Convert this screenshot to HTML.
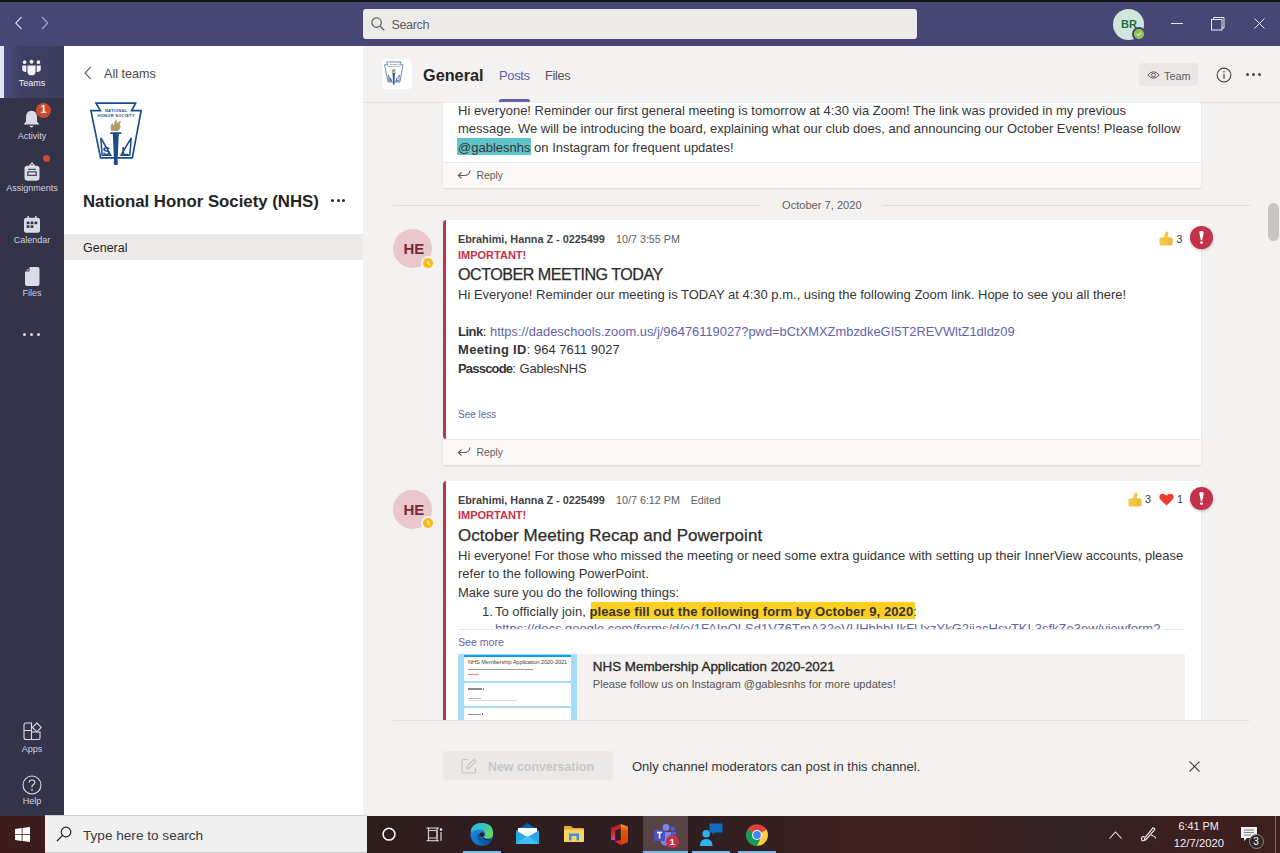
<!DOCTYPE html>
<html><head><meta charset="utf-8">
<style>
*{margin:0;padding:0;box-sizing:border-box}
html,body{width:1280px;height:853px;overflow:hidden;background:#f3f2f1;font-family:"Liberation Sans",sans-serif;color:#252423}
.a{position:absolute;white-space:nowrap}
svg{position:absolute;overflow:visible}
#topline{position:absolute;left:0;top:0;width:1280px;height:2px;background:#141414}
#title{position:absolute;left:0;top:2px;width:1280px;height:44px;background:#464775}
#rail{position:absolute;left:0;top:46px;width:64px;height:770px;background:#33344a}
#sel{position:absolute;left:0;top:46px;width:64px;height:52px;background:linear-gradient(90deg,#4d4f86 0%,#3e3f62 35%,#3d3e5f 100%)}
#selbar{position:absolute;left:0;top:46px;width:4px;height:52px;background:#e4e4f5}
.rl{position:absolute;left:0;width:64px;text-align:center;font-size:9px;line-height:9px;color:#d2d0e0}
#side{position:absolute;left:64px;top:46px;width:299px;height:770px;background:#fff}
#main{position:absolute;left:363px;top:46px;width:917px;height:770px;background:#f3f2f1}
#taskbar{position:absolute;left:0;top:816px;width:1280px;height:37px;background:linear-gradient(90deg,#3b1c1c 0%,#2f1d1e 30%,#2f1f21 55%,#3f1f1f 68%,#3c1f1f 75%,#312225 84%,#3d1f1f 93%,#3e1e1e 100%)}
.card{position:absolute;left:442.5px;width:758px;background:#fff;border-radius:3px;box-shadow:0 1px 2px rgba(0,0,0,.12)}
.redb{position:absolute;left:0;top:0;bottom:0;width:3px;background:#c4314b;border-radius:3px 0 0 3px}
.reply{position:absolute;left:0;right:0;bottom:0;height:26px;background:#faf9f8;border-top:1px solid #edebe9;border-radius:0 0 3px 3px}
.t13{font-size:13px;line-height:13px;color:#363534}
.lnk{color:#6264a7}
</style></head>
<body>
<svg width="0" height="0" style="position:absolute"><defs>
<symbol id="nhs" viewBox="0 0 62 72">
<path d="M11 5.1 H50.6 L46.6 12.7 H56.1 L47.3 59.9 H15.6 L5.9 12.7 H15.3 Z" fill="#fff" stroke="#1b4d8a" stroke-width="1.7" stroke-linejoin="miter"/>
<text x="31" y="14.2" font-size="4" font-weight="bold" fill="#1b4d8a" text-anchor="middle" font-family="Liberation Sans" textLength="22">NATIONAL</text>
<text x="31" y="19.2" font-size="4" font-weight="bold" fill="#1b4d8a" text-anchor="middle" font-family="Liberation Sans" textLength="37">HONOR SOCIETY</text>
<path d="M26.5 33 Q24.5 28.5 27.5 24.5 Q27.5 27.5 29 27 Q29 23 32 21.2 Q31 24.5 32.5 25 Q33.5 23 36.2 23 Q34 25.5 35.5 28 Q35.5 31.5 32.5 33 Z" fill="#b39b6b"/>
<path d="M25.3 34.2 H36.3 V36 H33.8 L32.5 64 H29.1 L27.8 36 H25.3 Z" fill="#1b4d8a"/>
<circle cx="30.8" cy="65" r="2.2" fill="#1b4d8a"/>
<path d="M15.8 40 L25.8 57.2 H17.2 Z" fill="none" stroke="#1b4d8a" stroke-width="1.5"/>
<path d="M46.2 40 L36 57.2 H44.8 Z" fill="none" stroke="#1b4d8a" stroke-width="1.5"/>
<text x="17.6" y="57.2" font-size="11.5" font-weight="bold" fill="#1b4d8a" font-family="Liberation Sans">S</text>
<text x="36.6" y="57.2" font-size="11.5" font-weight="bold" fill="#1b4d8a" font-family="Liberation Sans">L</text>
</symbol></defs></svg>
<div id="topline"></div>
<div id="title"></div>
<!-- title bar content -->
<svg style="left:14px;top:16px" width="10" height="14" viewBox="0 0 10 14"><path d="M7.5 1 L1.8 7 L7.5 13" fill="none" stroke="#d8d8ea" stroke-width="1.1"/></svg>
<svg style="left:40px;top:16px" width="10" height="14" viewBox="0 0 10 14"><path d="M2 1 L7.7 7 L2 13" fill="none" stroke="#a9a9c8" stroke-width="1.1"/></svg>
<div class="a" style="left:363px;top:9px;width:554px;height:30px;background:#edebe9;border-radius:3px"></div>
<svg style="left:371px;top:17px" width="14" height="14" viewBox="0 0 14 14"><circle cx="5.6" cy="5.6" r="4.7" fill="none" stroke="#616161" stroke-width="1.2"/><path d="M9 9 L13.2 13.2" stroke="#616161" stroke-width="1.3"/></svg>
<div class="a" style="left:391.5px;top:18.9px;font-size:12.6px;line-height:12.6px;color:#605e5c;letter-spacing:-0.4px">Search</div>
<div class="a" style="left:1113px;top:9px;width:31px;height:31px;border-radius:50%;background:#cfe7da"></div>
<div class="a" style="left:1121px;top:19px;font-size:11px;line-height:11px;font-weight:bold;color:#1f6e43">BR</div>
<div class="a" style="left:1132px;top:27px;width:13.5px;height:13.5px;border-radius:50%;background:#464775"></div>
<div class="a" style="left:1134px;top:29px;width:9.5px;height:9.5px;border-radius:50%;background:#92c353"></div>
<svg style="left:1134px;top:29px" width="10" height="10" viewBox="0 0 10 10"><path d="M2.8 5 L4.3 6.4 L7.2 3.6" fill="none" stroke="#fff" stroke-width="1"/></svg>
<div class="a" style="left:1171px;top:23px;width:12px;height:1px;background:#e8e8f2"></div>
<svg style="left:1211px;top:15px" width="15" height="16" viewBox="0 0 15 16"><rect x="0.5" y="4.5" width="10.5" height="10.5" fill="none" stroke="#e8e8f2" stroke-width="1"/><path d="M2.5 4.5 V2.5 H13 V13 H11" fill="none" stroke="#e8e8f2" stroke-width="1"/></svg>
<svg style="left:1254px;top:18px" width="12" height="12" viewBox="0 0 12 12"><path d="M0.5 0.5 L10.5 10.5 M10.5 0.5 L0.5 10.5" stroke="#e8e8f2" stroke-width="1"/></svg>

<div id="rail"></div>
<div id="sel"></div>
<div id="selbar"></div>
<!-- RAIL -->
<svg style="left:22.2px;top:60px" width="19" height="15.8" viewBox="0 0 22 17" preserveAspectRatio="none"><circle cx="3" cy="2.3" r="2" fill="#f3f2f8"/><circle cx="11" cy="1.9" r="2.2" fill="#f3f2f8"/><circle cx="19" cy="2.3" r="2" fill="#f3f2f8"/><path d="M0.3 6 H5 V13 Q2 13 0.3 11 Z" fill="#f3f2f8"/><path d="M21.7 6 H17 V13 Q20 13 21.7 11 Z" fill="#f3f2f8"/><path d="M6.3 5.8 H15.7 V12 Q15.7 16.5 11 16.5 Q6.3 16.5 6.3 12 Z" fill="#f3f2f8"/></svg>
<div class="rl" style="top:79px;color:#f0f0f8">Teams</div>
<svg style="left:23px;top:110px" width="17" height="19" viewBox="0 0 17 19"><path d="M8.5 0.8 Q3 1 3 7.5 V11.5 L0.6 14.6 H16.4 L14 11.5 V7.5 Q14 1 8.5 0.8 Z" fill="#dcdae4"/><path d="M6.2 15.8 Q8.5 19.2 10.8 15.8 Z" fill="#dcdae4"/></svg>
<div class="a" style="left:36px;top:102.5px;width:15.2px;height:15.2px;border-radius:50%;background:#cc4a31"></div>
<div class="a" style="left:36px;top:105px;width:15.2px;text-align:center;font-size:10px;line-height:10px;font-weight:bold;color:#fff">1</div>
<div class="rl" style="top:131.5px">Activity</div>
<div class="a" style="left:42.8px;top:154.5px;width:7px;height:7px;border-radius:50%;background:#cc4a31"></div>
<svg style="left:24px;top:162px" width="16" height="19" viewBox="0 0 16 19"><path d="M5.5 3.8 L8 0.8 L10.5 3.8 Z" fill="none" stroke="#dcdae4" stroke-width="1.1"/><rect x="0.5" y="3.8" width="15" height="15" rx="3" fill="#dcdae4"/><rect x="3.2" y="9.3" width="9.6" height="4.6" fill="#33344a"/><rect x="4.3" y="10.4" width="7.4" height="2.4" fill="#dcdae4"/><rect x="4" y="6.8" width="8" height="1" fill="#33344a"/></svg>
<div class="rl" style="top:183.5px">Assignments</div>
<svg style="left:24px;top:216px" width="16" height="17" viewBox="0 0 16 17"><rect x="0" y="1.8" width="16" height="15" rx="2.5" fill="#dcdae4"/><rect x="3.5" y="0" width="1.4" height="3" fill="#dcdae4"/><rect x="11.1" y="0" width="1.4" height="3" fill="#dcdae4"/><rect x="2.7" y="5.6" width="2.8" height="2.6" fill="#33344a"/><rect x="6.6" y="5.6" width="2.8" height="2.6" fill="#33344a"/><rect x="10.5" y="5.6" width="2.8" height="2.6" fill="#33344a"/><rect x="2.7" y="9.3" width="2.8" height="2.6" fill="#33344a"/><rect x="6.6" y="9.3" width="2.8" height="2.6" fill="#33344a"/></svg>
<div class="rl" style="top:235.5px">Calendar</div>
<svg style="left:24.5px;top:266.5px" width="15" height="19" viewBox="0 0 15 19"><path d="M5 0 H12.5 Q14.5 0 14.5 2 V17 Q14.5 19 12.5 19 H2 Q0 19 0 17 V5 Z" fill="#dcdae4"/><path d="M4 0.3 V4 H0.3" fill="none" stroke="#33344a" stroke-width="1"/></svg>
<div class="rl" style="top:289px">Files</div>
<div class="a" style="left:23px;top:333px;width:3.2px;height:3.2px;border-radius:50%;background:#dcdae4"></div>
<div class="a" style="left:30px;top:333px;width:3.2px;height:3.2px;border-radius:50%;background:#dcdae4"></div>
<div class="a" style="left:37px;top:333px;width:3.2px;height:3.2px;border-radius:50%;background:#dcdae4"></div>
<svg style="left:22.5px;top:721.5px" width="19" height="19" viewBox="0 0 19 19"><path d="M1 8.5 H8.5 V1 H3 Q1 1 1 3 Z M8.5 8.5 V17.5 H3 Q1 17.5 1 15.5 V8.5 M8.5 17.5 H15.5 Q17 17.5 17 16 V10 H8.5" fill="none" stroke="#dcdae4" stroke-width="1.1"/><path d="M13.8 1 L18.2 5.4 L13.8 9.8 L9.4 5.4 Z" fill="none" stroke="#dcdae4" stroke-width="1.1"/></svg>
<div class="rl" style="top:744.5px">Apps</div>
<svg style="left:21.5px;top:774.5px" width="20" height="20" viewBox="0 0 20 20"><circle cx="10" cy="10" r="9" fill="none" stroke="#dcdae4" stroke-width="1.1"/><path d="M7.2 7.6 Q7.2 5 10 5 Q12.8 5 12.8 7.4 Q12.8 9 10.9 9.9 Q10 10.4 10 12 V12.4" fill="none" stroke="#dcdae4" stroke-width="1.2"/><circle cx="10" cy="14.8" r="0.9" fill="#dcdae4"/></svg>
<div class="rl" style="top:797px">Help</div>

<div id="side"></div>
<!-- SIDEBAR -->
<svg style="left:84px;top:66px" width="8" height="14" viewBox="0 0 8 14"><path d="M6.8 0.8 L1 7 L6.8 13.2" fill="none" stroke="#605e5c" stroke-width="1.1"/></svg>
<div class="a" style="left:104px;top:67.5px;font-size:12.6px;line-height:12.6px;color:#484644">All teams</div>
<div class="a" style="left:83px;top:193.5px;font-size:16.8px;line-height:16.8px;font-weight:bold;color:#252423">National Honor Society (NHS)</div>
<svg style="left:85px;top:98px" width="62" height="72"><use href="#nhs"/></svg>
<div class="a" style="left:331px;top:199px;width:3px;height:3px;border-radius:50%;background:#252423"></div>
<div class="a" style="left:336.5px;top:199px;width:3px;height:3px;border-radius:50%;background:#252423"></div>
<div class="a" style="left:342px;top:199px;width:3px;height:3px;border-radius:50%;background:#252423"></div>
<div class="a" style="left:64px;top:234px;width:299px;height:26px;background:#edebe9"></div>
<div class="a t13" style="left:83px;top:241.5px;color:#252423;font-size:12.5px">General</div>

<div id="main"></div>
<!--MAIN-->
<!-- card 1 (partial) -->
<div class="card" style="top:60px;height:128px"><div class="reply" style="height:26px"></div></div>
<div class="a" style="left:457px;top:138px;width:74px;height:17px;background:#5fc4c9"></div>
<div class="a t13" style="left:458px;top:103.7px">Hi everyone! Reminder our first general meeting is tomorrow at 4:30 via Zoom! The link was provided in my previous</div>
<div class="a t13" style="left:458px;top:122px">message. We will be introducing the board, explaining what our club does, and announcing our October Events! Please follow</div>
<div class="a t13" style="left:458px;top:141px">@gablesnhs on Instagram for frequent updates!</div>
<svg style="left:457px;top:169px" width="14" height="10" viewBox="0 0 14 10"><path d="M13 1.5 Q12.5 6.5 7 6.5 H1.5 M4.5 3.5 L1.3 6.5 L4.5 9.5" fill="none" stroke="#605e5c" stroke-width="1.1"/></svg>
<div class="a" style="left:476.5px;top:170.8px;font-size:10.4px;line-height:10.4px;color:#605e5c">Reply</div>

<!-- header -->
<div class="a" style="left:363px;top:46px;width:917px;height:56px;background:#f3f2f1;box-shadow:0 1px 1px rgba(0,0,0,.06)"></div>
<div class="a" style="left:382px;top:59px;width:30px;height:30px;background:#fff;border-radius:4px"></div>
<svg style="left:385px;top:60.6px" width="23" height="28.5" viewBox="5.9 4.3 50.2 63" preserveAspectRatio="none"><use href="#nhs"/></svg>
<div class="a" style="left:423px;top:67px;font-size:16.25px;line-height:16.25px;font-weight:bold;color:#252423">General</div>
<div class="a" style="left:499px;top:69.2px;font-size:13px;line-height:13px;color:#6264a7;letter-spacing:-0.36px">Posts</div>
<div class="a" style="left:545px;top:70.2px;font-size:12.7px;line-height:12.7px;color:#53514f;letter-spacing:-0.3px">Files</div>
<div class="a" style="left:499px;top:99px;width:31px;height:3px;background:#6264a7;border-radius:2px 2px 0 0"></div>
<div class="a" style="left:1139px;top:63px;width:59px;height:23px;background:#e9e8e7;border-radius:3px"></div>
<svg style="left:1147px;top:69.5px" width="13" height="10" viewBox="0 0 13 10"><path d="M0.8 5 Q6.5 -1.5 12.2 5 Q6.5 11.5 0.8 5 Z" fill="none" stroke="#605e5c" stroke-width="1"/><circle cx="6.5" cy="5" r="1.9" fill="none" stroke="#605e5c" stroke-width="1"/></svg>
<div class="a" style="left:1164px;top:70.6px;font-size:10.9px;line-height:10.9px;color:#605e5c">Team</div>
<svg style="left:1215.5px;top:67px" width="16" height="16" viewBox="0 0 16 16"><circle cx="8" cy="8" r="6.9" fill="none" stroke="#484644" stroke-width="1.1"/><rect x="7.4" y="6.8" width="1.2" height="5" fill="#484644"/><circle cx="8" cy="4.8" r="0.8" fill="#484644"/></svg>
<div class="a" style="left:1246px;top:72.6px;width:3px;height:3px;border-radius:50%;background:#484644"></div>
<div class="a" style="left:1252px;top:72.6px;width:3px;height:3px;border-radius:50%;background:#484644"></div>
<div class="a" style="left:1258px;top:72.6px;width:3px;height:3px;border-radius:50%;background:#484644"></div>

<!-- separator -->
<div class="a" style="left:393px;top:205px;width:368px;height:1px;background:#e1dfdd"></div>
<div class="a" style="left:882px;top:205px;width:368px;height:1px;background:#e1dfdd"></div>
<div class="a" style="left:782px;top:200.2px;font-size:11.1px;line-height:11.1px;color:#605e5c">October 7, 2020</div>
<div class="a" style="left:1268px;top:203px;width:11px;height:38px;background:#c8c6c4;border-radius:6px"></div>

<!-- card 2 -->
<div class="card" style="top:220px;height:245px"><div class="redb" style="bottom:26px"></div><div class="reply"></div></div>
<div class="a" style="left:393px;top:229px;width:39px;height:39px;border-radius:50%;background:#e9c7cd"></div>
<div class="a" style="left:403.5px;top:241px;font-size:15px;line-height:15px;font-weight:bold;color:#772b38">HE</div>
<div class="a" style="left:420.5px;top:255.8px;width:14px;height:14px;border-radius:50%;background:#f3f2f1"></div>
<div class="a" style="left:422.5px;top:257.8px;width:10px;height:10px;border-radius:50%;background:#fbb913"></div>
<svg style="left:422.5px;top:257.8px" width="10" height="10" viewBox="0 0 10 10"><path d="M5 2.3 V5.2 L6.8 6.8" fill="none" stroke="#fff" stroke-width="1.1"/></svg>
<div class="a" style="left:458px;top:234.1px;font-size:10.84px;line-height:10.84px;font-weight:bold;color:#424242">Ebrahimi, Hanna Z - 0225499</div>
<div class="a" style="left:616px;top:234.2px;font-size:10.76px;line-height:10.76px;color:#605e5c">10/7 3:55 PM</div>
<div class="a" style="left:458px;top:249.7px;font-size:11px;line-height:11px;font-weight:bold;color:#c4314b">IMPORTANT!</div>
<div class="a" style="left:458px;top:266.3px;font-size:16.1px;line-height:16.1px;color:#2d2c2b;letter-spacing:-0.5px;-webkit-text-stroke:0.25px #2d2c2b">OCTOBER MEETING TODAY</div>
<div class="a t13" style="left:458px;top:287.8px">Hi Everyone! Reminder our meeting is TODAY at 4:30 p.m., using the following Zoom link. Hope to see you all there!</div>
<div class="a t13" style="left:458px;top:324.6px"><b style="letter-spacing:-0.5px">Link</b>: <span class="lnk" style="font-size:12.9px">https://dadeschools.zoom.us/j/96476119027?pwd=bCtXMXZmbzdkeGI5T2REVWltZ1dldz09</span></div>
<div class="a t13" style="left:458px;top:343.4px"><b style="letter-spacing:0.3px">Meeting ID</b>: 964 7611 9027</div>
<div class="a t13" style="left:458px;top:362.1px"><b style="letter-spacing:-0.8px">Passcode</b>: <span style="letter-spacing:-0.2px">GablesNHS</span></div>
<div class="a" style="left:458px;top:409.7px;font-size:10px;line-height:10px;color:#6264a7">See less</div>
<svg style="left:457px;top:446px" width="14" height="10" viewBox="0 0 14 10"><path d="M13 1.5 Q12.5 6.5 7 6.5 H1.5 M4.5 3.5 L1.3 6.5 L4.5 9.5" fill="none" stroke="#605e5c" stroke-width="1.1"/></svg>
<div class="a" style="left:476.5px;top:447.8px;font-size:10.4px;line-height:10.4px;color:#605e5c">Reply</div>
<!-- reactions card2 -->
<svg style="left:1158.6px;top:231.4px" width="14" height="15" viewBox="0 0 14 15"><path d="M0.5 8 Q0.5 6.6 2 6.6 H4.6 L6.6 1.6 Q7.2 0.2 8.5 0.7 Q9.7 1.3 9.3 3 L8.6 6.2 H12 Q13.6 6.2 13.6 7.8 V13 Q13.6 14.6 12 14.6 H2 Q0.5 14.6 0.5 13.2 Z" fill="#f6c544"/><path d="M9.2 8.7 H13.4 M9.2 10.7 H13.4 M9.2 12.7 H13.2" stroke="#dba93a" stroke-width="0.8"/><path d="M9.2 6.4 V14.4" stroke="#e4b53c" stroke-width="0.7"/></svg>
<div class="a" style="left:1176.5px;top:233.8px;font-size:10.8px;line-height:10.8px;color:#3b3a39">3</div>
<div class="a" style="left:1190px;top:226px;width:23px;height:23px;border-radius:50%;background:#c4314b;box-shadow:0 1px 3px rgba(0,0,0,.25)"></div>
<svg style="left:1190px;top:226px" width="23" height="23" viewBox="0 0 23 23"><path d="M9.3 6.2 Q9.3 4.9 11.5 4.9 Q13.7 4.9 13.7 6.2 L12.4 13.6 Q12.3 14.2 11.5 14.2 Q10.7 14.2 10.6 13.6 Z" fill="#fff"/><circle cx="11.5" cy="16.6" r="1.45" fill="#fff"/></svg>


<!-- card 3 -->
<div class="card" style="top:481px;height:260px;overflow:hidden" id="c3"><div class="redb"></div></div>
<div class="a" style="left:393px;top:489.5px;width:39px;height:39px;border-radius:50%;background:#e9c7cd"></div>
<div class="a" style="left:403.5px;top:501.5px;font-size:15px;line-height:15px;font-weight:bold;color:#772b38">HE</div>
<div class="a" style="left:420.5px;top:516.3px;width:14px;height:14px;border-radius:50%;background:#f3f2f1"></div>
<div class="a" style="left:422.5px;top:518.3px;width:10px;height:10px;border-radius:50%;background:#fbb913"></div>
<svg style="left:422.5px;top:518.3px" width="10" height="10" viewBox="0 0 10 10"><path d="M5 2.3 V5.2 L6.8 6.8" fill="none" stroke="#fff" stroke-width="1.1"/></svg>
<div class="a" style="left:458px;top:494.6px;font-size:10.84px;line-height:10.84px;font-weight:bold;color:#424242">Ebrahimi, Hanna Z - 0225499</div>
<div class="a" style="left:616px;top:494.6px;font-size:10.76px;line-height:10.76px;color:#605e5c">10/7 6:12 PM</div>
<div class="a" style="left:690.7px;top:494.6px;font-size:10.6px;line-height:10.6px;color:#605e5c">Edited</div>
<div class="a" style="left:458px;top:510.4px;font-size:11px;line-height:11px;font-weight:bold;color:#c4314b">IMPORTANT!</div>
<div class="a" style="left:458px;top:527.2px;font-size:17px;line-height:17px;color:#2d2c2b;letter-spacing:0.05px;-webkit-text-stroke:0.25px #2d2c2b">October Meeting Recap and Powerpoint</div>
<div class="a t13" style="left:458px;top:548.5px">Hi everyone! For those who missed the meeting or need some extra guidance with setting up their InnerView accounts, please</div>
<div class="a t13" style="left:458px;top:567px">refer to the following PowerPoint.</div>
<div class="a t13" style="left:458px;top:586.1px">Make sure you do the following things:</div>
<div class="a t13" style="left:482px;top:604.9px">1.</div>
<div class="a" style="left:590.7px;top:602.3px;width:324px;height:16.4px;background:#fccf22"></div>
<div class="a t13" style="left:495px;top:604.9px">To officially join, <b style="letter-spacing:0.1px">please fill out the following form by October 9, 2020</b>:</div>
<div class="a" style="left:458px;top:620px;width:727px;height:8.8px;overflow:hidden"><div class="a t13 lnk" style="left:37px;top:2.4px">https://docs.google.com/forms/d/e/1FAIpQLSd1VZ6TmA32eVUHbhbUkFUxzYkG2iiacHsyTKL3sfkZe3ew/viewform?</div></div>
<div class="a" style="left:458px;top:628.8px;width:727px;height:1px;background:#e8e6ee"></div>
<div class="a" style="left:458px;top:637.3px;font-size:10.6px;line-height:10.6px;color:#6264a7">See more</div>
<div class="a" style="left:457.6px;top:654px;width:727.4px;height:67px;background:#f3f2f1"></div>
<div class="a" style="left:458px;top:654px;width:119px;height:67px;background:#a8dcf6;border-radius:3px 0 0 0"></div>
<div class="a" style="left:464px;top:654.6px;width:106.7px;height:2px;background:#0b9bef"></div>
<div class="a" style="left:464px;top:656.6px;width:106.7px;height:24px;background:#fff;border-radius:0 0 1.5px 1.5px"></div>
<div class="a" style="left:468px;top:659.2px;font-size:5.7px;line-height:7px;color:#444;letter-spacing:-0.1px">NHS Membership Application 2020-2021</div>
<div class="a" style="left:468px;top:668.8px;width:65px;height:1.2px;background:#9a9a9a"></div>
<div class="a" style="left:468px;top:674.3px;width:11px;height:1.2px;background:#e88"></div>
<div class="a" style="left:464px;top:683px;width:106.7px;height:22.6px;background:#fff;border-radius:1.5px"></div>
<div class="a" style="left:468px;top:688.4px;width:14px;height:1.2px;background:#8a8a8a"></div>
<div class="a" style="left:482.5px;top:688px;width:1.5px;height:1.5px;background:#e44"></div>
<div class="a" style="left:468px;top:697.6px;width:13px;height:1px;background:#bbb"></div>
<div class="a" style="left:468px;top:700.2px;width:49px;height:0.6px;background:#ddd"></div>
<div class="a" style="left:464px;top:708px;width:106.7px;height:13px;background:#fff;border-radius:1.5px"></div>
<div class="a" style="left:468px;top:713.6px;width:13px;height:1.2px;background:#8a8a8a"></div>
<div class="a" style="left:481.5px;top:713.2px;width:1.5px;height:1.5px;background:#e44"></div>
<div class="a" style="left:592.8px;top:659.8px;font-size:13.4px;line-height:13.4px;color:#2b2a29;-webkit-text-stroke:0.35px #2b2a29">NHS Membership Application 2020-2021</div>
<div class="a" style="left:592.8px;top:678.9px;font-size:11.1px;line-height:11.1px;color:#53514f">Please follow us on Instagram @gablesnhs for more updates!</div>
<!-- reactions card3 -->
<svg style="left:1127.6px;top:492.3px" width="14" height="15" viewBox="0 0 14 15"><path d="M0.5 8 Q0.5 6.6 2 6.6 H4.6 L6.6 1.6 Q7.2 0.2 8.5 0.7 Q9.7 1.3 9.3 3 L8.6 6.2 H12 Q13.6 6.2 13.6 7.8 V13 Q13.6 14.6 12 14.6 H2 Q0.5 14.6 0.5 13.2 Z" fill="#f6c544"/><path d="M9.2 8.7 H13.4 M9.2 10.7 H13.4 M9.2 12.7 H13.2" stroke="#dba93a" stroke-width="0.8"/><path d="M9.2 6.4 V14.4" stroke="#e4b53c" stroke-width="0.7"/></svg>
<div class="a" style="left:1145px;top:494.4px;font-size:10.8px;line-height:10.8px;color:#3b3a39">3</div>
<svg style="left:1159px;top:492.5px" width="15" height="13" viewBox="0 0 15 13"><path d="M7.5 12.5 L1.8 7 Q-0.8 4.3 1.2 1.8 Q3.8 -0.8 7.5 2.6 Q11.2 -0.8 13.8 1.8 Q15.8 4.3 13.2 7 Z" fill="#ef3b2d"/></svg>
<div class="a" style="left:1177px;top:494.4px;font-size:10.8px;line-height:10.8px;color:#3b3a39">1</div>
<div class="a" style="left:1190px;top:487px;width:23px;height:23px;border-radius:50%;background:#c4314b;box-shadow:0 1px 3px rgba(0,0,0,.25)"></div>
<svg style="left:1190px;top:487px" width="23" height="23" viewBox="0 0 23 23"><path d="M9.3 6.2 Q9.3 4.9 11.5 4.9 Q13.7 4.9 13.7 6.2 L12.4 13.6 Q12.3 14.2 11.5 14.2 Q10.7 14.2 10.6 13.6 Z" fill="#fff"/><circle cx="11.5" cy="16.6" r="1.45" fill="#fff"/></svg>


<!-- compose area covers below 720.5 -->
<div class="a" style="left:363px;top:721px;width:917px;height:95px;background:#f3f2f1"></div>
<div class="a" style="left:393px;top:720px;width:857px;height:1px;background:#e6e4e2"></div>
<div class="a" style="left:443px;top:750.5px;width:170px;height:29.5px;background:#ebe9e8;border-radius:3px"></div>
<svg style="left:461px;top:757.5px" width="16" height="16" viewBox="0 0 16 16"><path d="M6.5 1.5 H3 Q1 1.5 1 3.5 V13 Q1 15 3 15 H12.5 Q14.5 15 14.5 13 V9.5" fill="none" stroke="#c8c6c4" stroke-width="1.1"/><path d="M13.2 1.3 L15 3.1 L8.2 9.9 L5.6 10.6 L6.3 8 Z" fill="none" stroke="#c8c6c4" stroke-width="1.1"/></svg>
<div class="a" style="left:488px;top:760.5px;font-size:12.4px;line-height:12.4px;font-weight:bold;color:#c8c6c4">New conversation</div>
<div class="a t13" style="left:632px;top:760px">Only channel moderators can post in this channel.</div>
<svg style="left:1189px;top:761px" width="11" height="11" viewBox="0 0 11 11"><path d="M0.5 0.5 L10.5 10.5 M10.5 0.5 L0.5 10.5" stroke="#484644" stroke-width="1.1"/></svg>


<div id="taskbar"></div>
<!--TASKBAR-->
<div class="a" style="left:0;top:816px;width:45px;height:37px;background:#3e1b1c"></div>
<svg style="left:15px;top:827px" width="15" height="15" viewBox="0 0 15 15"><path d="M0 2 L6.7 1 V7 H0 Z M7.5 0.9 L15 0 V7 H7.5 Z M0 7.8 H6.7 V14 L0 13 Z M7.5 7.8 H15 V15 L7.5 14.1 Z" fill="#fff"/></svg>
<div class="a" style="left:45px;top:815px;width:322px;height:38px;background:#f0f0f0;border-top:1.5px solid #d0d0d0;border-bottom:1px solid #c8c8c8"></div>
<svg style="left:56px;top:826px" width="16" height="16" viewBox="0 0 16 16"><circle cx="10" cy="6" r="4.8" fill="none" stroke="#222" stroke-width="1.2"/><path d="M6.6 9.4 L1 15" stroke="#222" stroke-width="1.3"/></svg>
<div class="a" style="left:83px;top:828.9px;font-size:13.6px;line-height:13.6px;color:#3a3a3a">Type here to search</div>
<svg style="left:382px;top:827px" width="14" height="14" viewBox="0 0 14 14"><circle cx="7" cy="7.2" r="5.9" fill="none" stroke="#fff" stroke-width="1.5"/></svg>
<svg style="left:426px;top:827px" width="16" height="15" viewBox="0 0 16 15"><path d="M0.5 1 H13 M0.5 13.8 H13 M2.5 1 V13.8 M11 1 V13.8 M15 5 V13.8" fill="none" stroke="#e8e8e8" stroke-width="1.1"/><rect x="2.5" y="3.5" width="8.5" height="7.5" fill="none" stroke="#ccc" stroke-width="1.1"/><circle cx="15" cy="2.5" r="1.2" fill="#fff"/></svg>
<div class="a" style="left:463px;top:851px;width:38px;height:2px;background:#76b9ed"></div>
<svg style="left:466px;top:819px" width="32" height="30" viewBox="0 0 32 30"><defs><linearGradient id="eb" x1="0" y1="0" x2="0.4" y2="1"><stop offset="0" stop-color="#2196e6"/><stop offset="1" stop-color="#0e6cc2"/></linearGradient><linearGradient id="ec" x1="0" y1="0" x2="1" y2="0.6"><stop offset="0" stop-color="#2eaff0"/><stop offset="0.5" stop-color="#33c4bf"/><stop offset="1" stop-color="#66d95a"/></linearGradient></defs>
<circle cx="15.8" cy="15.4" r="11.3" fill="url(#eb)"/>
<path d="M11.3 15.2 Q11 23 17 25.6 Q23 27 25.6 21.2 Q20 22.6 16.8 20.4 Q13.4 18.2 13.8 14.2 Z" fill="#0c57a3"/>
<path d="M17.2 18.8 Q19.5 20.8 26 20.4 L25.6 21.4 Q19.5 22.2 16.2 19.6 Z" fill="#351d1f"/>
<path d="M4.6 13 Q5.5 4.1 15.8 4.1 Q26.8 4.1 27.1 14.5 Q27.1 19.3 22.3 19.4 Q18.8 19.6 17.8 18 Q19.8 16.8 19.3 14.2 Q18.5 10.6 14.2 10.4 Q8.5 10.2 4.6 13 Z" fill="url(#ec)"/>
<circle cx="16" cy="15.6" r="2.4" fill="#351d1f"/>
</svg>
<svg style="left:516px;top:823px" width="23" height="21" viewBox="0 0 23 21"><path d="M0 7.5 L11.5 0 L23 7.5 V21 H0 Z" fill="#0a5cb5"/><path d="M2 5 H21 V12 L11.5 17 L2 12 Z" fill="#fff"/><path d="M0 7.5 L11.5 14 L23 7.5 V21 H0 Z" fill="#28a8ea"/><path d="M0 21 L11.5 12.5 L23 21 Z" fill="#50c8f6" opacity=".7"/></svg>
<svg style="left:564px;top:826px" width="20" height="16" viewBox="0 0 20 16"><path d="M0 1 Q0 0 1 0 H7 L9 2 H19 Q20 2 20 3 V15 Q20 16 19 16 H1 Q0 16 0 15 Z" fill="#e9a82f"/><rect x="0" y="3.5" width="20" height="12.5" rx="1" fill="#fcd463"/><path d="M5 7.5 H15 V14.5 H12.5 V10 H7.5 V14.5 H5 Z" fill="#3a8ee6"/></svg>
<svg style="left:605px;top:819px" width="32" height="30" viewBox="0 0 32 30"><defs><linearGradient id="oo" x1="0" y1="0" x2="0" y2="1"><stop offset="0" stop-color="#f49a12"/><stop offset="0.35" stop-color="#e0540c"/><stop offset="1" stop-color="#d8400a"/></linearGradient><linearGradient id="or" x1="0" y1="0" x2="0.3" y2="1"><stop offset="0" stop-color="#a1131a"/><stop offset="0.6" stop-color="#d1283a"/><stop offset="1" stop-color="#c855a8"/></linearGradient></defs>
<path d="M6 8.8 L15.8 4.9 V9.3 L10.2 11.6 V20.8 L6 21.2 Z" fill="url(#or)"/>
<path d="M9.2 21.9 L15.8 21.1 V26 Z" fill="#e8223c"/>
<path d="M15.8 4.9 L23 7.4 V23.2 L15.8 26 Z" fill="url(#oo)"/>
</svg>
<div class="a" style="left:643px;top:816px;width:45px;height:37px;background:#574343"></div>
<div class="a" style="left:643px;top:851px;width:45px;height:2px;background:#76b9ed"></div>
<svg style="left:653.5px;top:823.5px" width="25" height="22" viewBox="0 0 25 22"><circle cx="12" cy="3.5" r="3.4" fill="#7b83eb"/><circle cx="18.8" cy="4.8" r="2.5" fill="#5059c9"/><path d="M15 8 H22 V14 Q22 17 18.5 17 Q15 17 15 14 Z" fill="#5059c9"/><path d="M6.5 8 H17 V16 Q17 21.5 11.7 21.5 Q6.5 21.5 6.5 16 Z" fill="#7b83eb"/><rect x="0" y="6" width="11" height="11" rx="1" fill="#4b53bc"/><path d="M3 8.5 H8 M5.5 8.5 V14.5" stroke="#fff" stroke-width="1.5"/></svg>
<div class="a" style="left:666px;top:835px;width:12.5px;height:12.5px;border-radius:50%;background:#c4314b"></div>
<div class="a" style="left:666px;top:836.5px;width:12.5px;text-align:center;font-size:9.5px;line-height:9.5px;font-weight:bold;color:#fff">1</div>
<div class="a" style="left:692px;top:851px;width:38px;height:2px;background:#76b9ed"></div>
<svg style="left:700px;top:822.5px" width="23" height="23" viewBox="0 0 23 23"><path d="M9.5 0.5 H22.5 V9.5 H15 L12.5 12 V9.5 H9.5 Z" fill="#0f6cbd"/><circle cx="6.2" cy="10.8" r="3.8" fill="#2cb3ef"/><path d="M0 23 Q0 16 6.2 16 Q12.5 16 12.5 23 Z" fill="#2cb3ef"/></svg>
<div class="a" style="left:738px;top:851px;width:38px;height:2px;background:#76b9ed"></div>
<svg style="left:746px;top:823.5px" width="22" height="22" viewBox="0 0 22 22"><circle cx="11" cy="11" r="10.8" fill="#db4437"/><path d="M11 11 L1.6 5.6 A10.8 10.8 0 0 0 11 21.8 L16.4 11 Z" fill="#0f9d58"/><path d="M11 11 L20.4 5.6 A10.8 10.8 0 0 1 11 21.8 L16.4 11 Z" fill="#ffcd40"/><circle cx="11" cy="11" r="5" fill="#fff"/><circle cx="11" cy="11" r="3.9" fill="#4285f4"/></svg>
<svg style="left:1109px;top:830.5px" width="13" height="8" viewBox="0 0 13 8"><path d="M0.5 7.5 L6.5 1 L12.5 7.5" fill="none" stroke="#e8e8e8" stroke-width="1.1"/></svg>
<svg style="left:1140px;top:826.5px" width="17" height="16" viewBox="0 0 17 16"><path d="M13 0.8 L5 10.5 Q3.5 12.5 5.5 13 L14.5 3 Q15.5 1.5 13 0.8 Z M6 12.5 Q1 15.5 1.5 11.5 Q2 9 4.5 9.8 M11 8 Q16 9.5 15.5 11.5" fill="none" stroke="#e8e8e8" stroke-width="1.2"/></svg>
<div class="a" style="left:1178.6px;top:820.8px;font-size:10.8px;line-height:10.8px;color:#f0f0f0">6:41 PM</div>
<div class="a" style="left:1173.8px;top:837.6px;font-size:11.3px;line-height:11.3px;color:#f0f0f0">12/7/2020</div>
<svg style="left:1241px;top:827px" width="16" height="14" viewBox="0 0 16 14"><path d="M0 0 H16 V11 H6 L3 14 V11 H0 Z" fill="#f0f0f0"/><path d="M3 3 H13 M3 5.5 H13 M3 8 H10" stroke="#777" stroke-width="0.9"/></svg>
<div class="a" style="left:1248.5px;top:833.5px;width:15px;height:15px;border-radius:50%;background:#2a2a2a;border:1px solid #8a8a8a"></div>
<div class="a" style="left:1248.5px;top:836.8px;width:15px;text-align:center;font-size:10px;line-height:10px;color:#fff">3</div>
<div class="a" style="left:1275px;top:816px;width:1px;height:37px;background:#7a6a6a"></div>

</body></html>
